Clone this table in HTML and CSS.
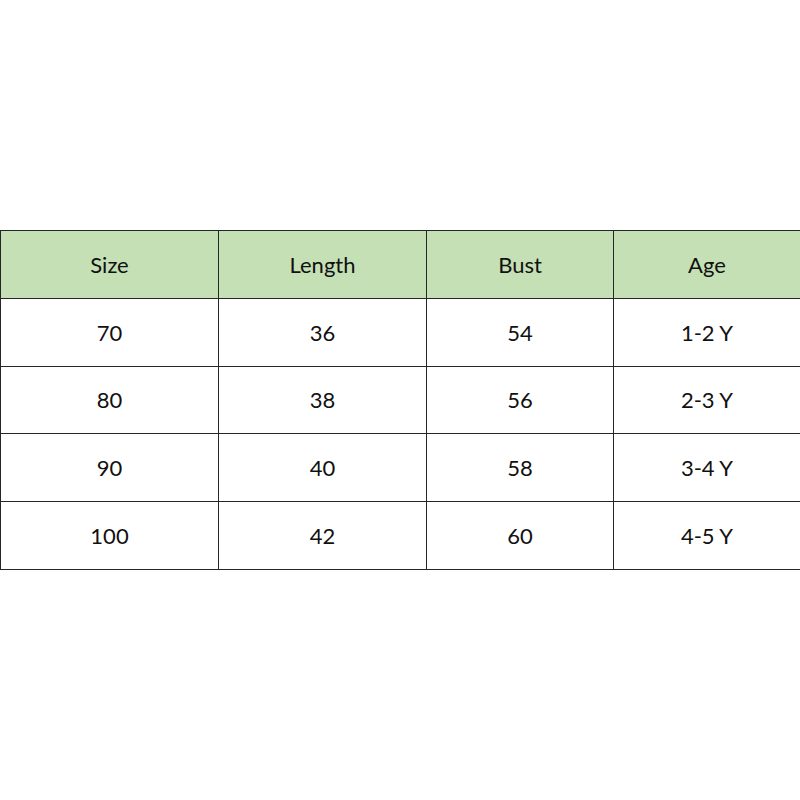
FILE: index.html
```html
<!DOCTYPE html>
<html>
<head>
<meta charset="utf-8">
<link rel="stylesheet" href="styles.css">
</head>
<body>
<div class="page">
  <table class="size-table">
    <colgroup>
      <col class="c1"><col class="c2"><col class="c3"><col class="c4">
    </colgroup>
    <thead>
      <tr class="head"><th>Size</th><th>Length</th><th>Bust</th><th>Age</th></tr>
    </thead>
    <tbody>
      <tr><td>70</td><td>36</td><td>54</td><td>1-2 Y</td></tr>
      <tr><td>80</td><td>38</td><td>56</td><td>2-3 Y</td></tr>
      <tr><td>90</td><td>40</td><td>58</td><td>3-4 Y</td></tr>
      <tr><td>100</td><td>42</td><td>60</td><td>4-5 Y</td></tr>
    </tbody>
  </table>
</div>
</body>
</html>
```

FILE: styles.css
```css
html, body {
  margin: 0;
  padding: 0;
  background: #ffffff;
}
.page {
  width: 800px;
  height: 800px;
  padding-top: 230px;
  box-sizing: border-box;
}
.size-table {
  width: 800px;
  border-collapse: collapse;
  table-layout: fixed;
  font-family: "Lato", "Open Sans", sans-serif;
  font-size: 22px;
  color: #111;
}
.c1 { width: 218px; }
.c2 { width: 208px; }
.c3 { width: 187px; }
.c4 { width: 187px; }
.size-table th,
.size-table td {
  border: 1px solid #262626;
  text-align: center;
  vertical-align: middle;
  font-weight: normal;
  height: 66.8px;
  padding: 0;
}
.head th {
  background: #c5e0b4;
}
```
